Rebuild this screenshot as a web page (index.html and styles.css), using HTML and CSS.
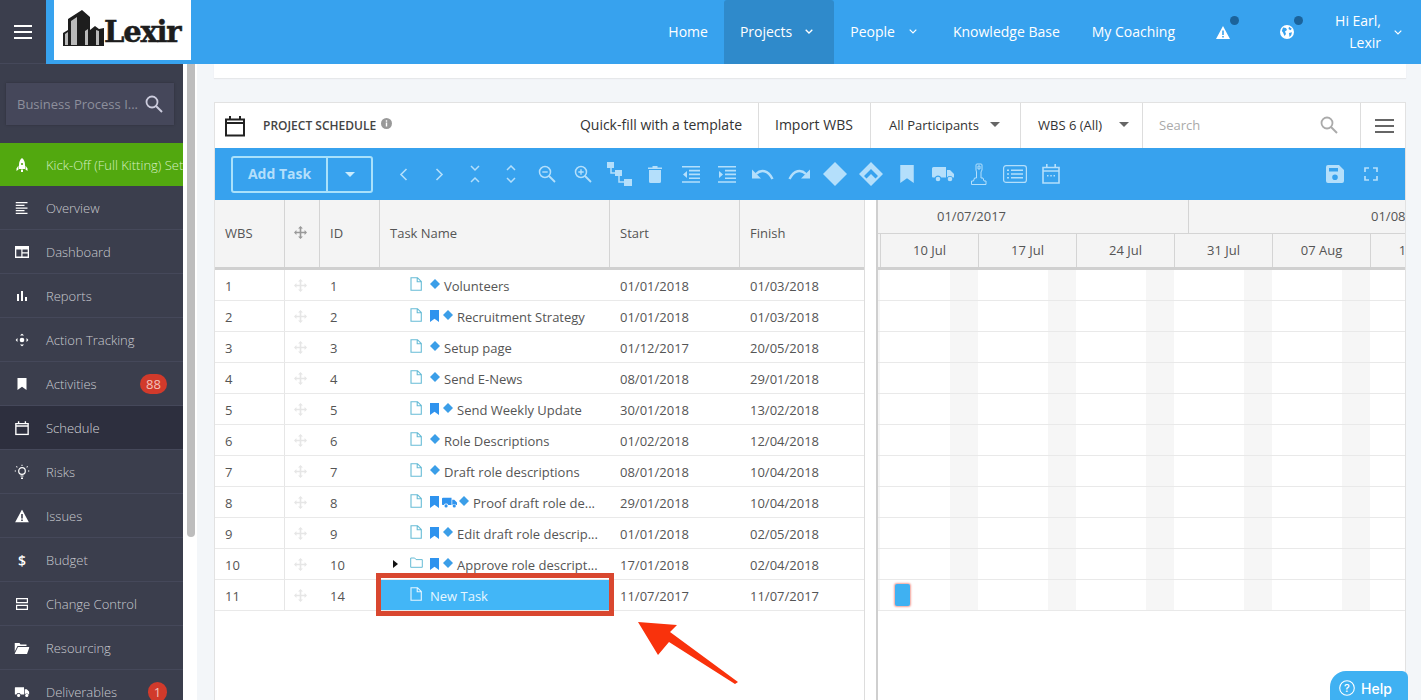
FILE: index.html
```html
<!DOCTYPE html>
<html lang="en">
<head>
<meta charset="utf-8">
<title>Project Schedule</title>
<link rel="stylesheet" href="styles.css">
</head>
<body>
<svg class="defs" width="0" height="0" aria-hidden="true">
  <symbol id="i-note" viewBox="0 0 12 14"><path d="M1 .7h6.5L11.3 4.5v8.8H1zM7.2 .9v3.9h4" fill="none" stroke="currentColor" stroke-width="1.1"/></symbol>
  <symbol id="i-folder" viewBox="0 0 13 11"><path d="M.7 1h4l1.3 1.6h6.3v7.7H.7z" fill="none" stroke="currentColor" stroke-width="1"/></symbol>
  <symbol id="i-mark" viewBox="0 0 9 12"><path d="M0 0h9v12L4.500 8.800 0 12z" fill="currentColor"/></symbol>
  <symbol id="i-dia" viewBox="0 0 10 10"><path d="M5 0l5 5-5 5-5-5z" fill="currentColor"/></symbol>
  <symbol id="i-truck" viewBox="0 0 22 16"><path d="M1.500 1H14v10.500H9.200a3.500 3.500 0 0 0-6.400 0H1a1 1 0 0 1-1-1v-8A1.500 1.500 0 0 1 1.500 1zM15 4h3l4 4v3a.5.5 0 0 1-.5.5h-.800a3.500 3.500 0 0 0-5.700 0z" fill="currentColor"/><circle cx="6" cy="13" r="2.300" fill="currentColor"/><circle cx="18" cy="13" r="2.300" fill="currentColor"/></symbol>
  <symbol id="i-move" viewBox="0 0 16 16"><path d="M8 0l3 3H9v4h4V5l3 3-3 3V9H9v4h2l-3 3-3-3h2V9H3v2L0 8l3-3v2h4V3H5z" fill="currentColor"/></symbol>
  <symbol id="i-cal" viewBox="0 0 20 22"><path d="M1 4.500h18v16H1zM1 8h18" fill="none" stroke="currentColor" stroke-width="2"/><path d="M4 1h2v4H4zM14 1h2v4h-2z" fill="currentColor"/></symbol>
  <symbol id="i-search" viewBox="0 0 18 18"><circle cx="7" cy="7" r="5.500" fill="none" stroke="currentColor" stroke-width="1.800"/><path d="M11 11l6 6" stroke="currentColor" stroke-width="2"/></symbol>
</svg>

<header class="topbar">
  <button class="burger" aria-label="Menu"><span></span><span></span><span></span></button>
  <div class="logo">
    <svg class="logo-mark" width="46" height="38" viewBox="0 0 46 38"><path d="M0 37V24l5-3v-11L19 1l8 7v13l5-4 4 3 5-1v18z" fill="#1d1d1d"/><path d="M2 36V25l3-2v13zM8 36V12l6-4v28zM22 36V22l3-2v16zM33 36V21l3 1v14z" fill="#b9b9b9"/></svg>
    <span class="logo-text">Lexir</span>
  </div>
  <nav class="nav">
    <a class="nav-item">Home</a>
    <a class="nav-item nav-active">Projects<svg class="chev" width="8" height="5" viewBox="0 0 8 5"><path d="M.7.7L4 4l3.300-3.300" fill="none" stroke="currentColor" stroke-width="1.300"/></svg></a>
    <a class="nav-item nav-people">People<svg class="chev" width="10" height="5" viewBox="0 0 8 5"><path d="M.7.7L4 4l3.300-3.300" fill="none" stroke="currentColor" stroke-width="1.200"/></svg></a>
    <a class="nav-item">Knowledge Base</a>
    <a class="nav-item nav-coach">My Coaching</a>
    <a class="nav-icon nav-icon-warn"><svg width="14" height="13" viewBox="0 0 14 13"><path fill-rule="evenodd" d="M7 0l7 13H0zM6.200 4.500v4.500h1.600V4.500zM6.200 10v1.500h1.600V10z" fill="#fff"/></svg><i class="dot"></i></a>
    <a class="nav-icon nav-icon-globe"><svg width="14" height="14" viewBox="0 0 14 14"><circle cx="7" cy="7" r="7" fill="#fff"/><path d="M3 2.500l3 .5 1 2-2 1.500 1 2.500-1.500 2L3 7.500 1.800 6zM9 1.800l2.800 2-1.300 1.500L8.500 4zM9 8l3-.7-.8 3L9.500 12z" fill="#37a2ee"/></svg><i class="dot"></i></a>
    <a class="nav-user"><span>Hi Earl,<br>Lexir</span><svg class="chev" width="10" height="5" viewBox="0 0 8 5"><path d="M.7.7L4 4l3.300-3.300" fill="none" stroke="currentColor" stroke-width="1.200"/></svg></a>
  </nav>
</header>

<div class="shell">
  <aside class="sidebar">
    <div class="side-search"><span class="side-search-text">Business Process I...</span><svg class="side-search-icon" width="18" height="18"><use href="#i-search"/></svg></div>
    <ul class="side-menu">
      <li class="side-item side-green"><svg class="side-icon" width="12" height="14" viewBox="0 0 12 14"><path d="M6 0C8 1.500 9 4 9 7v4H3V7C3 4 4 1.500 6 0zM2.500 7.500L.5 10.500V13l2-1.500zM9.500 7.500l2 3V13l-2-1.500zM5 11.500h2V14H5z" fill="#fff"/><circle cx="6" cy="6" r="1.100" fill="#52a80f"/></svg><span>Kick-Off (Full Kitting) Set</span></li>
      <li class="side-item"><svg class="side-icon" width="13" height="12" viewBox="0 0 13 12"><path d="M0 0h12v1.300H0zM0 2.700h9v1.300H0zM0 5.400h12v1.300H0zM0 8h9v1.300H0zM0 10.700h12V12H0z" fill="#fff"/></svg><span>Overview</span></li>
      <li class="side-item"><svg class="side-icon" width="14" height="12" viewBox="0 0 14 12"><path fill-rule="evenodd" d="M0 0h14v12H0zM1.300 3.500v7h5v-7zM7.500 3.500v2.800h5.200V3.500zM7.500 7.500v3h5.200v-3z" fill="#fff"/></svg><span>Dashboard</span></li>
      <li class="side-item"><svg class="side-icon" width="10" height="10" viewBox="0 0 10 10"><path d="M0 3h2v7H0zM4 0h2v10H4zM8 6h2v4H8z" fill="#fff"/></svg><span>Reports</span></li>
      <li class="side-item"><svg class="side-icon" width="13" height="13" viewBox="0 0 13 13"><circle cx="6.500" cy="6.500" r="2.300" fill="#fff"/><path d="M6.500 0l2 2h-4zM6.500 13l2-2h-4zM0 6.500l2-2v4zM13 6.500l-2-2v4z" fill="#fff"/></svg><span>Action Tracking</span></li>
      <li class="side-item"><svg class="side-icon" width="10" height="12"><use href="#i-mark"/></svg><span>Activities</span><b class="badge">88</b></li>
      <li class="side-item side-current"><svg class="side-icon" width="14" height="15"><use href="#i-cal"/></svg><span>Schedule</span></li>
      <li class="side-item"><svg class="side-icon" width="15" height="15" viewBox="0 0 15 15"><circle cx="7.500" cy="6.500" r="3.300" fill="none" stroke="#fff" stroke-width="1.200"/><path d="M6 11h3v1H6zM6.500 13h2v1.500h-2zM7 0h1v1.500H7zM0 6h1.500v1H0zM13.500 6H15v1h-1.500zM2 1.500l1.200 1-.7.7-1-1.200zM13 1.500l-1.200 1 .7.7 1-1.200z" fill="#fff"/></svg><span>Risks</span></li>
      <li class="side-item"><svg class="side-icon" width="14" height="13" viewBox="0 0 14 13"><path fill-rule="evenodd" d="M7 0l7 13H0zM6.200 4.500v4.500h1.600V4.500zM6.200 10v1.500h1.600V10z" fill="#fff"/></svg><span>Issues</span></li>
      <li class="side-item"><b class="side-dollar">$</b><span>Budget</span></li>
      <li class="side-item"><svg class="side-icon" width="12" height="12" viewBox="0 0 12 12"><path fill-rule="evenodd" d="M0 0h12v5.300H0zM1.200 1.200v2.900h9.600V1.200zM0 6.700h12V12H0zM1.200 7.900v2.900h9.600V7.900z" fill="#fff"/></svg><span>Change Control</span></li>
      <li class="side-item"><svg class="side-icon" width="15" height="12" viewBox="0 0 15 12"><path d="M0 1h5l1 1.500h6V4H3L0 10zM3.500 5H15l-2.500 7H0z" fill="#fff"/></svg><span>Resourcing</span></li>
      <li class="side-item"><svg class="side-icon" width="15" height="11"><use href="#i-truck"/></svg><span>Deliverables</span><b class="badge badge-round">1</b></li>
    </ul>
  </aside>
  <div class="side-scroll"><div class="side-thumb"></div></div>

  <main class="content">
    <div class="top-card"></div>
    <section class="panel">
      <div class="panel-head">
        <svg class="head-cal" width="20" height="22"><use href="#i-cal"/></svg>
        <h1 class="head-title">PROJECT SCHEDULE</h1>
        <svg class="head-info" width="11" height="11" viewBox="0 0 11 11"><circle cx="5.500" cy="5.500" r="5.500" fill="#999"/><path d="M4.800 4.500h1.400v4H4.800zM4.800 2.300h1.400v1.400H4.800z" fill="#fff"/></svg>
        <div class="head-tools">
          <a class="tool tool-fill">Quick-fill with a template</a>
          <a class="tool tool-import">Import WBS</a>
          <a class="tool tool-part">All Participants<i class="caret"></i></a>
          <a class="tool tool-wbs">WBS 6 (All)<i class="caret"></i></a>
          <div class="tool tool-search"><span>Search</span><svg width="18" height="18"><use href="#i-search"/></svg></div>
          <a class="tool tool-menu" aria-label="Menu"><span></span><span></span><span></span></a>
        </div>
      </div>

      <div class="blue-bar">
        <div class="add-group"><span class="add-main">Add Task</span><span class="add-drop"><i class="caret caret-light"></i></span></div>
        <div class="bar-icons">
          <span class="bi"><svg width="9" height="13" viewBox="0 0 9 13"><path d="M7.500 1L2 6.500 7.500 12" fill="none" stroke="currentColor" stroke-width="1.600"/></svg></span>
          <span class="bi"><svg width="9" height="13" viewBox="0 0 9 13"><path d="M1.500 1L7 6.500 1.500 12" fill="none" stroke="currentColor" stroke-width="1.600"/></svg></span>
          <span class="bi"><svg width="10" height="18" viewBox="0 0 10 18"><path d="M1 1l4 4 4-4M1 17l4-4 4 4" fill="none" stroke="currentColor" stroke-width="1.500"/></svg></span>
          <span class="bi"><svg width="10" height="18" viewBox="0 0 10 18"><path d="M1 5l4-4 4 4M1 13l4 4 4-4" fill="none" stroke="currentColor" stroke-width="1.500"/></svg></span>
          <span class="bi"><svg width="18" height="18" viewBox="0 0 18 18"><circle cx="7" cy="7" r="5.500" fill="none" stroke="currentColor" stroke-width="1.500"/><path d="M11 11l6 6" stroke="currentColor" stroke-width="1.800"/><path d="M4.300 6.300h5.400v1.400H4.300z" fill="currentColor"/></svg></span>
          <span class="bi"><svg width="18" height="18" viewBox="0 0 18 18"><circle cx="7" cy="7" r="5.500" fill="none" stroke="currentColor" stroke-width="1.500"/><path d="M11 11l6 6" stroke="currentColor" stroke-width="1.800"/><path d="M4.300 6.300h2v-2h1.400v2h2v1.400h-2v2H6.300v-2h-2z" fill="currentColor"/></svg></span>
          <span class="bi"><svg width="25" height="24" viewBox="0 0 25 24"><path d="M0 0h7v6H0zM8 8h7v6H8zM17 17h8v7h-8z" fill="currentColor"/><path d="M4 5v6h5M12 13v7h6" fill="none" stroke="currentColor" stroke-width="1.500"/></svg></span>
          <span class="bi"><svg width="14" height="17" viewBox="0 0 14 17"><path d="M4.500 0h5v1.500H14V3H0V1.500h4.500zM1 4h12v11.500a1.500 1.500 0 0 1-1.500 1.500h-9A1.500 1.500 0 0 1 1 15.500z" fill="currentColor"/></svg></span>
          <span class="bi"><svg width="18" height="17" viewBox="0 0 18 17"><path d="M0 0h18v1.600H0zM7 3.800h11v1.600H7zM7 7.600h11v1.600H7zM7 11.400h11V13H7zM0 15.200h18v1.600H0zM5 5v7L1 8.500z" fill="currentColor"/></svg></span>
          <span class="bi"><svg width="18" height="17" viewBox="0 0 18 17"><path d="M0 0h18v1.600H0zM7 3.800h11v1.600H7zM7 7.600h11v1.600H7zM7 11.400h11V13H7zM0 15.200h18v1.600H0zM1 5v7l4-3.500z" fill="currentColor"/></svg></span>
          <span class="bi"><svg width="22" height="13" viewBox="0 0 22 13"><path d="M4 6C9 1 16 2 20.500 11" fill="none" stroke="currentColor" stroke-width="2.400"/><path d="M0 1.500v9h9z" fill="currentColor"/></svg></span>
          <span class="bi"><svg width="22" height="13" viewBox="0 0 22 13"><path d="M18 6C13 1 6 2 1.500 11" fill="none" stroke="currentColor" stroke-width="2.400"/><path d="M22 1.500v9h-9z" fill="currentColor"/></svg></span>
          <span class="bi"><svg width="24" height="24" viewBox="0 0 24 24"><path d="M12 0l12 12-12 12L0 12z" fill="currentColor"/></svg></span>
          <span class="bi"><svg width="24" height="24" viewBox="0 0 24 24"><path fill-rule="evenodd" d="M12 0l12 12-12 12L0 12zM12 7l-7 7 2.500 2.500L12 12l4.500 4.500L19 14z" fill="currentColor"/></svg></span>
          <span class="bi"><svg width="14" height="18"><use href="#i-mark"/></svg></span>
          <span class="bi"><svg width="22" height="16"><use href="#i-truck"/></svg></span>
          <span class="bi"><svg width="16" height="22" viewBox="0 0 16 22"><path d="M6 1h4a1 1 0 0 1 1 1v5l-1 2v6h2l1 3h2v3.500H.5V18h2l1-3h2V9L5 7V2a1 1 0 0 1 1-1zM7 3v3h2V3z" fill="none" stroke="currentColor" stroke-width="1"/></svg></span>
          <span class="bi"><svg width="24" height="18" viewBox="0 0 24 18"><rect x=".6" y=".6" width="22.800" height="16.800" rx="2.500" fill="none" stroke="currentColor" stroke-width="1.200"/><path d="M4 4.500h2v1.400H4zM8 4.500h12v1.400H8zM4 8.300h2v1.400H4zM8 8.300h12v1.400H8zM4 12.100h2v1.400H4zM8 12.100h12v1.400H8z" fill="currentColor"/></svg></span>
          <span class="bi"><svg width="18" height="20" viewBox="0 0 18 20"><path d="M1 3.500h16v15.500H1zM1 7h16" fill="none" stroke="currentColor" stroke-width="1.600"/><path d="M4 0h1.600v4H4zM12.400 0H14v4h-1.600zM5 11h1.500v1.500H5zM8.300 11h1.500v1.500H8.300zM11.500 11H13v1.500h-1.500z" fill="currentColor"/></svg></span>
        </div>
        <div class="bar-right">
          <span class="bi"><svg width="18" height="18" viewBox="0 0 18 18"><path fill-rule="evenodd" d="M2 0h11l5 5v11a2 2 0 0 1-2 2H2a2 2 0 0 1-2-2V2a2 2 0 0 1 2-2zM3 3v3.500h9V3zM9 9.500a2.800 2.800 0 1 0 0 5.600 2.800 2.800 0 0 0 0-5.600z" fill="currentColor"/></svg></span>
          <span class="bi"><svg width="14" height="14" viewBox="0 0 14 14"><path d="M1 5V1h4M9 1h4v4M13 9v4H9M5 13H1V9" fill="none" stroke="currentColor" stroke-width="1.700"/></svg></span>
        </div>
      </div>

      <div class="schedule">
        <div class="sheet">
          <div class="sheet-head">
            <div class="hc">WBS</div>
            <div class="hc hc-move"><svg width="13" height="13"><use href="#i-move"/></svg></div>
            <div class="hc">ID</div>
            <div class="hc">Task Name</div>
            <div class="hc">Start</div>
            <div class="hc">Finish</div>
          </div>
          <div class="sheet-row"><div class="c">1</div><div class="c c-move"><svg width="13" height="13"><use href="#i-move"/></svg></div><div class="c">1</div><div class="c c-task"><svg class="t-note" width="12" height="14"><use href="#i-note"/></svg><svg class="t-dia" width="10" height="10"><use href="#i-dia"/></svg><span class="t-name">Volunteers</span></div><div class="c">01/01/2018</div><div class="c">01/03/2018</div></div>
          <div class="sheet-row"><div class="c">2</div><div class="c c-move"><svg width="13" height="13"><use href="#i-move"/></svg></div><div class="c">2</div><div class="c c-task"><svg class="t-note" width="12" height="14"><use href="#i-note"/></svg><svg class="t-mark" width="9" height="12"><use href="#i-mark"/></svg><svg class="t-dia" width="10" height="10"><use href="#i-dia"/></svg><span class="t-name">Recruitment Strategy</span></div><div class="c">01/01/2018</div><div class="c">01/03/2018</div></div>
          <div class="sheet-row"><div class="c">3</div><div class="c c-move"><svg width="13" height="13"><use href="#i-move"/></svg></div><div class="c">3</div><div class="c c-task"><svg class="t-note" width="12" height="14"><use href="#i-note"/></svg><svg class="t-dia" width="10" height="10"><use href="#i-dia"/></svg><span class="t-name">Setup page</span></div><div class="c">01/12/2017</div><div class="c">20/05/2018</div></div>
          <div class="sheet-row"><div class="c">4</div><div class="c c-move"><svg width="13" height="13"><use href="#i-move"/></svg></div><div class="c">4</div><div class="c c-task"><svg class="t-note" width="12" height="14"><use href="#i-note"/></svg><svg class="t-dia" width="10" height="10"><use href="#i-dia"/></svg><span class="t-name">Send E-News</span></div><div class="c">08/01/2018</div><div class="c">29/01/2018</div></div>
          <div class="sheet-row"><div class="c">5</div><div class="c c-move"><svg width="13" height="13"><use href="#i-move"/></svg></div><div class="c">5</div><div class="c c-task"><svg class="t-note" width="12" height="14"><use href="#i-note"/></svg><svg class="t-mark" width="9" height="12"><use href="#i-mark"/></svg><svg class="t-dia" width="10" height="10"><use href="#i-dia"/></svg><span class="t-name">Send Weekly Update</span></div><div class="c">30/01/2018</div><div class="c">13/02/2018</div></div>
          <div class="sheet-row"><div class="c">6</div><div class="c c-move"><svg width="13" height="13"><use href="#i-move"/></svg></div><div class="c">6</div><div class="c c-task"><svg class="t-note" width="12" height="14"><use href="#i-note"/></svg><svg class="t-dia" width="10" height="10"><use href="#i-dia"/></svg><span class="t-name">Role Descriptions</span></div><div class="c">01/02/2018</div><div class="c">12/04/2018</div></div>
          <div class="sheet-row"><div class="c">7</div><div class="c c-move"><svg width="13" height="13"><use href="#i-move"/></svg></div><div class="c">7</div><div class="c c-task"><svg class="t-note" width="12" height="14"><use href="#i-note"/></svg><svg class="t-dia" width="10" height="10"><use href="#i-dia"/></svg><span class="t-name">Draft role descriptions</span></div><div class="c">08/01/2018</div><div class="c">10/04/2018</div></div>
          <div class="sheet-row"><div class="c">8</div><div class="c c-move"><svg width="13" height="13"><use href="#i-move"/></svg></div><div class="c">8</div><div class="c c-task"><svg class="t-note" width="12" height="14"><use href="#i-note"/></svg><svg class="t-mark" width="9" height="12"><use href="#i-mark"/></svg><svg class="t-truck" width="15" height="11"><use href="#i-truck"/></svg><svg class="t-dia" width="10" height="10"><use href="#i-dia"/></svg><span class="t-name">Proof draft role de...</span></div><div class="c">29/01/2018</div><div class="c">10/04/2018</div></div>
          <div class="sheet-row"><div class="c">9</div><div class="c c-move"><svg width="13" height="13"><use href="#i-move"/></svg></div><div class="c">9</div><div class="c c-task"><svg class="t-note" width="12" height="14"><use href="#i-note"/></svg><svg class="t-mark" width="9" height="12"><use href="#i-mark"/></svg><svg class="t-dia" width="10" height="10"><use href="#i-dia"/></svg><span class="t-name">Edit draft role descrip...</span></div><div class="c">01/01/2018</div><div class="c">02/05/2018</div></div>
          <div class="sheet-row"><div class="c">10</div><div class="c c-move"><svg width="13" height="13"><use href="#i-move"/></svg></div><div class="c">10</div><div class="c c-task"><i class="t-tri"></i><svg class="t-note t-folder" width="13" height="11"><use href="#i-folder"/></svg><svg class="t-mark" width="9" height="12"><use href="#i-mark"/></svg><svg class="t-dia" width="10" height="10"><use href="#i-dia"/></svg><span class="t-name">Approve role descript...</span></div><div class="c">17/01/2018</div><div class="c">02/04/2018</div></div>
          <div class="sheet-row"><div class="c">11</div><div class="c c-move"><svg width="13" height="13"><use href="#i-move"/></svg></div><div class="c">14</div><div class="c c-task c-selected"><svg class="t-note" width="12" height="14"><use href="#i-note"/></svg><span class="t-name t-new">New Task</span></div><div class="c">11/07/2017</div><div class="c">11/07/2017</div></div>
        </div>
        <div class="splitter"></div>
        <div class="gantt">
          <div class="g-head">
            <div class="g-months"><div class="g-month">01/07/2017</div><div class="g-month">01/08/2017</div></div>
            <div class="g-weeks"><div class="g-week">10 Jul</div><div class="g-week">17 Jul</div><div class="g-week">24 Jul</div><div class="g-week">31 Jul</div><div class="g-week">07 Aug</div><div class="g-week">14 Aug</div><div class="g-week">21 Aug</div></div>
          </div>
          <div class="g-row"></div><div class="g-row"></div><div class="g-row"></div><div class="g-row"></div><div class="g-row"></div><div class="g-row"></div><div class="g-row"></div><div class="g-row"></div><div class="g-row"></div><div class="g-row"></div>
          <div class="g-row"><div class="g-bar"></div></div>
        </div>
      </div>
    </section>
  </main>
</div>

<div class="callout-box"></div>
<svg class="callout-arrow" width="110" height="72" viewBox="0 0 110 72"><path d="M0 0L39 3 32 10 100 60 97 62 31 20 20 33z" fill="#f9320c"/></svg>
<a class="help"><svg width="16" height="16" viewBox="0 0 16 16"><circle cx="8" cy="8" r="7.300" fill="none" stroke="#fff" stroke-width="1.100"/><text x="8" y="11.500" text-anchor="middle" class="help-q">?</text></svg>Help</a>
</body>
</html>
```
FILE: styles.css
```css
* { box-sizing: border-box; }
html, body { margin: 0; height: 700px; overflow: hidden; }
body { font-family: "Open Sans", "Liberation Sans", sans-serif; font-size: 13px; color: #555; background: #f3f6f9; position: relative; }
.defs { position: absolute; }
a { text-decoration: none; color: inherit; }
ul { list-style: none; margin: 0; padding: 0; }

/* top bar */
.topbar { display: flex; height: 64px; background: #37a2ee; color: #fff; }
.burger { width: 46px; height: 64px; background: #3b3e4d; border: 0; padding: 0; display: flex; flex-direction: column; justify-content: center; align-items: center; gap: 4px; border-bottom: 1px solid #45485a; }
.burger span { display: block; width: 18px; height: 2px; background: #fff; }
.logo { width: 137px; height: 60px; margin-left: 8px; background: #fff; display: flex; align-items: center; padding-left: 9px; color: #1d1d1d; }
.logo-mark { flex: none; margin-top: -4px; }
.logo-text { font-family: "DejaVu Serif", serif; font-weight: 700; font-size: 29px; letter-spacing: -1.2px; margin-left: -5px; margin-top: 4px; -webkit-text-stroke: .5px #1d1d1d; }
.nav { margin-left: auto; display: flex; align-items: stretch; font-size: 14px; }
.nav-item { display: flex; align-items: center; padding: 0 16px 2px; }
.nav-item .chev { margin-left: 13px; margin-right: 5px; }
.nav-people .chev { margin-left: 13px; margin-right: 3px; }
.nav-active { background: #2f8acb; border-radius: 3px 3px 0 0; }
.nav-coach { margin-right: 25px; }
.nav-icon { position: relative; display: flex; align-items: center; width: 64px; }
.dot { position: absolute; left: 14px; top: 16px; width: 9px; height: 9px; border-radius: 50%; background: #1b639b; }
.nav-user { display: flex; align-items: center; line-height: 22px; text-align: right; padding-left: 0; padding-right: 18px; margin-left: -9px; }
.nav-user .chev { margin-left: 12px; }

/* shell */
.shell { display: flex; height: 636px; }
.sidebar { width: 183px; background: #3b3e4d; flex: none; overflow: hidden; }
.side-search { margin: 19px 9px 18px 6px; height: 42px; background: #45475a; box-shadow: 0 0 2px #2c2e3a; display: flex; align-items: center; padding: 0 11px; color: #cdd; }
.side-search-text { color: #8d8f9c; white-space: nowrap; flex: 1; }
.side-search-icon { color: #ccd; flex: none; }
.side-item { display: flex; align-items: center; height: 44px; padding-left: 46px; position: relative; color: #c9cad0; font-weight: 300; white-space: nowrap; border-bottom: 1px solid #45485a; }
.side-icon, .side-dollar { position: absolute; left: 22px; top: 50%; transform: translate(-50%, -50%); color: #fff; }
.side-dollar { font-size: 14px; font-weight: 600; }
.side-green { height: 43px; background: #52a80f; color: #d5efc0; border: 0; overflow: hidden; }
.side-current { background: #2d2f3e; color: #d4d5da; }
.badge { position: absolute; left: 140px; top: 12px; height: 20px; width: 27px; border-radius: 10px; background: #d13a2b; color: #f3c1ba; font-weight: 400; text-align: center; line-height: 20px; font-size: 13px; }
.badge-round { left: 148px; width: 19px; top: 12px; }

.side-scroll { width: 14px; flex: none; background: #fff; position: relative; }
.side-thumb { width: 8px; height: 473px; margin-left: 4px; background: #bdbdbd; border-radius: 0 0 4px 4px; }

/* content */
.content { flex: 1; padding: 0 15px 0 17px; min-width: 0; }
.top-card { height: 14px; background: #fff; box-shadow: 0 1px 1px #e6e8ea; }
.panel { margin-top: 24px; background: #fff; border: 1px solid #e2e2e2; border-bottom: 0; height: 600px; }

.panel-head { display: flex; align-items: center; height: 45px; padding-left: 10px; }
.head-cal { color: #222; flex: none; }
.head-title { margin: 0 0 0 18px; font-size: 12px; font-weight: 600; color: #444; white-space: nowrap; }
.head-info { margin: -4px 0 0 5px; flex: none; }
.head-tools { margin-left: auto; display: flex; height: 100%; color: #333; }
.tool { display: flex; align-items: center; border-right: 1px solid #ddd; font-size: 14px; white-space: nowrap; padding-bottom: 2px; }
.tool-fill { padding-right: 16px; }
.tool-import { padding: 0 16px 2px; width: 112px; }
.tool-part { width: 150px; padding-left: 18px; font-size: 13px; }
.tool-wbs { width: 122px; padding-left: 17px; font-size: 13px; }
.tool-search { width: 218px; padding: 0 22px 2px 16px; justify-content: space-between; color: #aaa; font-size: 13px; }
.tool-search svg { color: #aaa; }
.tool-menu { width: 44px; border: 0; flex-direction: column; justify-content: center; gap: 4px; padding: 0 0 0 3px; }
.tool-menu span { width: 19px; height: 2px; background: #666; }
.caret { width: 0; height: 0; border-left: 5px solid transparent; border-right: 5px solid transparent; border-top: 5px solid #666; margin-left: 11px; }
.tool-wbs .caret { margin-left: 17px; }
.caret-light { border-top-color: #c9ecfd; margin: 0; }

.blue-bar { display: flex; align-items: center; height: 52px; background: #37a2ee; padding-left: 16px; color: #b4dffb; }
.add-group { display: flex; height: 37px; border: 2px solid #a9e1fb; border-radius: 3px; flex: none; }
.add-main { width: 95px; display: flex; align-items: center; justify-content: center; border-right: 2px solid #a9e1fb; font-weight: 700; font-size: 14px; color: #b4dffb; padding-bottom: 2px; }
.add-drop { width: 43px; display: flex; align-items: center; justify-content: center; }
.bar-icons { display: flex; margin-left: 12px; }
.bi { width: 36px; height: 36px; display: flex; align-items: center; justify-content: center; flex: none; }
.bar-right { display: flex; margin-left: auto; padding-right: 16px; }

/* schedule */
.schedule { display: flex; height: 503px; }
.sheet { width: 650px; flex: none; border-right: 1px solid #ddd; }
.sheet-head, .sheet-row { display: grid; grid-template-columns: 70px 35px 60px 230px 130px 124px; }
.sheet-head { height: 70px; background: #f4f4f4; border-bottom: 3px solid #d0d0d0; }
.hc { display: flex; align-items: center; padding: 0 0 2px 10px; border-right: 1px solid #d4d4d4; color: #555; }
.hc:last-child { border-right: 0; }
.hc-move { padding-left: 9px; color: #999; }
.sheet-row { height: 31px; border-bottom: 1px solid #e9e9e9; }
.c { display: flex; align-items: center; padding: 2px 0 0 10px; white-space: nowrap; }
.c-move { color: #e6e6e6; border-left: 1px solid #e6e6e6; margin-left: -1px; padding-left: 9px; padding-top: 0; }
.c-task { padding-left: 30px; position: relative; }
.t-note { color: #67bcd6; flex: none; margin-top: -4px; }
.t-folder { margin-top: -6px; margin-right: -1px; }
.t-mark { color: #2f93ee; flex: none; margin-left: 8px; margin-top: -2px; }
.t-truck { color: #2f93ee; flex: none; margin-left: 3px; margin-top: -2px; }
.t-dia { color: #3b9ee8; flex: none; margin-left: 8px; margin-top: -5px; }
.t-mark + .t-dia { margin-left: 4px; }
.t-truck + .t-dia { margin-left: 2px; }
.t-name { margin-left: 4px; }
.t-tri { position: absolute; left: 13px; top: 11px; width: 0; height: 0; border-left: 5px solid #111; border-top: 4px solid transparent; border-bottom: 4px solid transparent; }
.c-selected { background: #42b6f7; color: #fff; }
.c-selected .t-note { color: #e6f6ff; }
.t-new { margin-left: 8px; color: #e6f6ff; }

.splitter { width: 13px; flex: none; border-right: 2px solid #cfcfcf; }
.gantt { flex: 1; min-width: 0; overflow: hidden; }
.g-head { height: 70px; background: #f4f4f4; border-bottom: 3px solid #d0d0d0; overflow: hidden; }
.g-months { display: flex; height: 34px; border-bottom: 1px solid #d4d4d4; margin-left: -123px; }
.g-month { width: 434px; flex: none; text-align: center; line-height: 32px; border-right: 1px solid #d4d4d4; }
.g-weeks { display: flex; height: 33px; padding-left: 3px; }
.g-week { width: 98px; flex: none; text-align: center; line-height: 33px; border-right: 1px solid #d4d4d4; }
.g-week:first-child { border-left: 1px solid #d4d4d4; width: 99px; margin-left: -1px; }
.g-row { height: 31px; border-bottom: 1px solid #e9e9e9; background-image: linear-gradient(90deg, #f6f6f6 28px, transparent 28px); background-size: 98px 100%; background-position: 72px 0; display: flex; align-items: center; }
.g-bar { width: 15px; height: 22px; margin-left: 17px; border-radius: 2px; background: #3fb1f2; box-shadow: 0 0 2px 1px #f3a29a; }

/* overlays */
.callout-box { position: absolute; left: 376px; top: 573px; width: 238px; height: 43px; border: 5px solid #d9472f; }
.callout-arrow { position: absolute; left: 638px; top: 622px; }
.help { position: absolute; left: 1330px; top: 671px; width: 78px; height: 34px; background: #3fb1f2; border-radius: 16px 6px 6px 6px; color: #fff; display: flex; align-items: center; padding-left: 9px; gap: 6px; font-family: "Inter", "Liberation Sans", sans-serif; font-weight: 500; font-size: 14px; }
.help-q { font-size: 11px; fill: #fff; }
```
